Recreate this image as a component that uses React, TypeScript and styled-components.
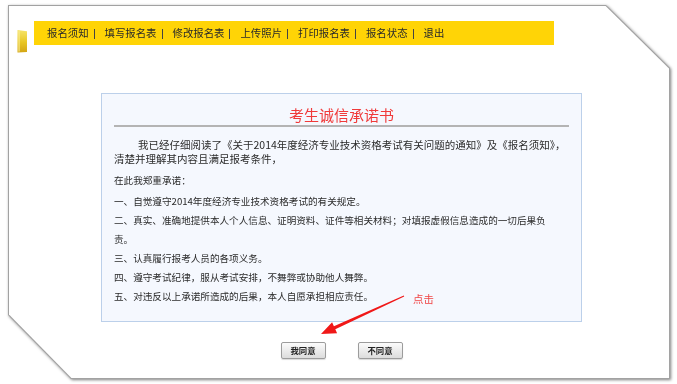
import React from 'react';
import styled, { createGlobalStyle } from 'styled-components';

const GlobalStyle = createGlobalStyle`
  html, body {
    margin: 0;
    padding: 0;
    background: #fff;
  }
  body {
    font-family: "Noto Sans CJK SC", "Liberation Sans", sans-serif;
    color: #2b2b2b;
  }
`;

const Shell = styled.div`
  padding: 5px 0 0 8px;
  width: 677px;
  height: 384px;
  box-sizing: border-box;
`;

const FrameShadow = styled.div`
  width: 662px;
  height: 374px;
  filter: drop-shadow(1px 1px 1.5px rgba(0, 0, 0, 0.5));
`;

const FrameBorder = styled.div`
  height: 100%;
  box-sizing: border-box;
  padding: 1px;
  background: #a2a2a2;
  clip-path: polygon(0 0, calc(100% - 64px) 0, 100% 63px, 100% 100%, 63px 100%, 0 calc(100% - 64px));
`;

const Frame = styled.div`
  position: relative;
  height: 100%;
  background: #fff;
  clip-path: polygon(0 0, calc(100% - 63.4px) 0, 100% 62.4px, 100% 100%, 62.4px 100%, 0 calc(100% - 63.4px));
`;

const NavRow = styled.div`
  display: flex;
  align-items: flex-start;
  gap: 6px;
  padding: 15px 0 0 8px;
`;

const Tab = styled.svg`
  margin-top: 8px;
  flex: none;
`;

const NavBar = styled.nav`
  display: flex;
  align-items: center;
  width: 520px;
  height: 24px;
  padding-left: 13px;
  box-sizing: border-box;
  background: #ffd406;
  font-size: 10.4px;
  color: #2a2a2a;
  white-space: nowrap;
`;

const NavLink = styled.span`
  line-height: 24px;
`;

const NavSep = styled.span`
  display: inline-block;
  width: 1px;
  height: 10px;
  background: #444;
  margin: 1px 10px 0 5px;
`;

const Card = styled.section`
  width: 481px;
  height: 229px;
  box-sizing: border-box;
  margin: 40px 0 0 92px;
  padding: 0 12px;
  background: #f5f8fe;
  border: 1px solid #bcd0ea;
`;

const Title = styled.h1`
  margin: 0;
  padding-top: 11px;
  height: 20px;
  line-height: 20px;
  text-align: center;
  font-size: 15px;
  font-weight: normal;
  color: #f03a3a;
  border-bottom: 2px solid #b4b4b4;
`;

const Intro = styled.p`
  margin: 11px 0 0 0;
  font-size: 10.5px;
  line-height: 14px;
  text-indent: 24px;
`;

const Pledges = styled.div`
  margin-top: 5px;
  font-size: 9.6px;
  line-height: 19px;
`;

const PledgeLine = styled.div<{ $gap?: number }>`
  margin-top: ${(p) => p.$gap ?? 0}px;
  white-space: nowrap;
`;

const ButtonRow = styled.div`
  display: flex;
  justify-content: center;
  gap: 32px;
  width: 481px;
  margin: 20px 0 0 92px;
`;

const Button = styled.button`
  width: 45px;
  height: 17px;
  padding: 0;
  border: 1px solid #9c9c9c;
  border-radius: 2px;
  background: linear-gradient(#fbfbfb, #dcdcdc);
  box-shadow: 0 1px 1px rgba(0, 0, 0, 0.15);
  font-family: "Noto Sans CJK SC", sans-serif;
  font-size: 8.4px;
  font-weight: bold;
  color: #222;
  line-height: 15px;
`;

const Arrow = styled.svg`
  position: absolute;
  left: 309px;
  top: 286px;
`;

const Hint = styled.span`
  position: absolute;
  left: 404px;
  top: 286px;
  font-size: 10.4px;
  line-height: 14px;
  color: #f04545;
`;

const navItems = ['报名须知', '填写报名表', '修改报名表', '上传照片', '打印报名表', '报名状态', '退出'];

export default function App() {
  return (
    <>
      <GlobalStyle />
      <Shell>
        <FrameShadow>
          <FrameBorder>
            <Frame>
              <NavRow>
                <Tab width="11" height="24" viewBox="0 0 11 24">
                  <defs>
                    <linearGradient id="tabg" x1="0" y1="0" x2="0" y2="1">
                      <stop offset="0" stopColor="#f6e46a" />
                      <stop offset="0.55" stopColor="#e8c624" />
                      <stop offset="1" stopColor="#d3a514" />
                    </linearGradient>
                  </defs>
                  <path d="M0.5 1 L10 2.2 L10 23 L0.5 23.5 Z" fill="url(#tabg)" />
                  <path d="M1.2 2 L3 2.2 L3 22.5 L1.2 22.8 Z" fill="#f8ec9a" opacity="0.6" />
                </Tab>
                <NavBar>
                  {navItems.map((item, i) => (
                    <React.Fragment key={item}>
                      <NavLink>{item}</NavLink>
                      {i < navItems.length - 1 && <NavSep />}
                    </React.Fragment>
                  ))}
                </NavBar>
              </NavRow>

              <Card>
                <Title>考生诚信承诺书</Title>
                <Intro>
                  我已经仔细阅读了《关于2014年度经济专业技术资格考试有关问题的通知》及《报名须知》，
                  <br />
                  清楚并理解其内容且满足报考条件，
                </Intro>
                <Pledges>
                  <PledgeLine>在此我郑重承诺：</PledgeLine>
                  <PledgeLine $gap={2}>一、自觉遵守2014年度经济专业技术资格考试的有关规定。</PledgeLine>
                  <PledgeLine>二、真实、准确地提供本人个人信息、证明资料、证件等相关材料；对填报虚假信息造成的一切后果负</PledgeLine>
                  <PledgeLine>责。</PledgeLine>
                  <PledgeLine>三、认真履行报考人员的各项义务。</PledgeLine>
                  <PledgeLine>四、遵守考试纪律，服从考试安排，不舞弊或协助他人舞弊。</PledgeLine>
                  <PledgeLine>五、对违反以上承诺所造成的后果，本人自愿承担相应责任。</PledgeLine>
                </Pledges>
              </Card>

              <ButtonRow>
                <Button type="button">我同意</Button>
                <Button type="button">不同意</Button>
              </ButtonRow>

              <Arrow width="90" height="46" viewBox="318 292 90 46">
                <polygon
                  points="403.8,295.6 333.9,326.3 332.1,322.3 321,334 337.1,333.3 335.3,329.3 404.2,296.4"
                  fill="#f01818"
                />
              </Arrow>
              <Hint>点击</Hint>
            </Frame>
          </FrameBorder>
        </FrameShadow>
      </Shell>
    </>
  );
}
